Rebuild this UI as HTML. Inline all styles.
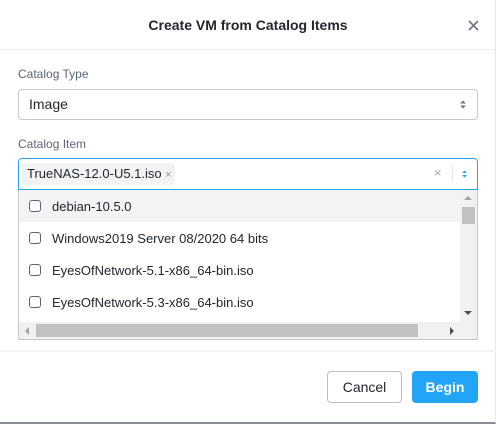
<!DOCTYPE html>
<html><head><style>
*{box-sizing:border-box;margin:0;padding:0}
body{width:496px;height:424px;background:#fff;font-family:"Liberation Sans",sans-serif;position:relative;overflow:hidden;color:#22272e}
.abs{position:absolute}
</style></head><body>
<div class="abs" style="left:0;top:0;width:496px;height:424px;border-right:1px solid #e4e6e9;border-bottom:2px solid #8a8d92"></div>
<div class="abs" style="left:0;top:14px;width:496px;text-align:center;font-size:14px;font-weight:bold;color:#22272e;line-height:22px">Create VM from Catalog Items</div>
<svg class="abs" style="left:468px;top:20px" width="11" height="11" viewBox="0 0 11 11"><path d="M1 1L10 10M10 1L1 10" stroke="#6b7480" stroke-width="1.6"/></svg>
<div class="abs" style="left:0;top:49px;width:496px;height:1px;background:#eceef0"></div>
<div class="abs" style="left:18px;top:67px;font-size:12px;color:#5b6573">Catalog Type</div>
<div class="abs" style="left:18px;top:89px;width:460px;height:31px;border:1px solid #c4c8ce;border-radius:4px"></div>
<div class="abs" style="left:29px;top:96px;font-size:14px;color:#22272e">Image</div>
<svg class="abs" style="left:460px;top:100px" width="6" height="9" viewBox="0 0 6 9"><path d="M0 3.5L3 0.5L6 3.5ZM0 5.5L3 8.5L6 5.5Z" fill="#6b7480"/></svg>
<div class="abs" style="left:18px;top:137px;font-size:12px;color:#5b6573">Catalog Item</div>
<div class="abs" style="left:18px;top:158px;width:460px;height:32px;border:1px solid #22a5f7;border-radius:4px 4px 0 0"></div>
<div class="abs" style="left:22px;top:163px;width:153px;height:22px;background:#f2f3f4;border-radius:3px"></div>
<div class="abs" style="left:27px;top:166px;font-size:13px;color:#22272e">TrueNAS-12.0-U5.1.iso <span style="color:#8a929c;font-size:11px">×</span></div>
<div class="abs" style="left:434px;top:165px;font-size:13px;color:#a0a6ae">×</div>
<div class="abs" style="left:452px;top:166px;width:1px;height:16px;background:#e4e6e9"></div>
<svg class="abs" style="left:462px;top:170px" width="5" height="8" viewBox="0 0 5 8"><path d="M0 3L2.5 0.5L5 3ZM0 5L2.5 7.5L5 5Z" fill="#22a5f7"/></svg>
<div class="abs" style="left:18px;top:190px;width:460px;height:150px;border:1px solid #c4c8ce;border-top:none"></div>
<div class="abs" style="left:19px;top:190px;width:441px;height:32px;background:#f2f3f4"></div>
<div class="abs" style="left:19px;top:190px;width:441px;font-size:13px;color:#22272e">
<div style="height:32px;display:flex;align-items:center"><span style="width:12px;height:12px;border:1.5px solid #5b6573;border-radius:3px;margin:0 11px 0 10px;background:#fff"></span>debian-10.5.0</div>
<div style="height:32px;display:flex;align-items:center"><span style="width:12px;height:12px;border:1.5px solid #5b6573;border-radius:3px;margin:0 11px 0 10px"></span>Windows2019 Server 08/2020 64 bits</div>
<div style="height:32px;display:flex;align-items:center"><span style="width:12px;height:12px;border:1.5px solid #5b6573;border-radius:3px;margin:0 11px 0 10px"></span>EyesOfNetwork-5.1-x86_64-bin.iso</div>
<div style="height:32px;display:flex;align-items:center"><span style="width:12px;height:12px;border:1.5px solid #5b6573;border-radius:3px;margin:0 11px 0 10px"></span>EyesOfNetwork-5.3-x86_64-bin.iso</div>
</div>
<div class="abs" style="left:460px;top:190px;width:17px;height:132px;background:#f1f1f1"></div>
<div class="abs" style="left:462px;top:207px;width:13px;height:17px;background:#c1c1c1"></div>
<svg class="abs" style="left:464px;top:196px" width="8" height="5"><path d="M0 4L4 0L8 4Z" fill="#a3a3a3"/></svg>
<svg class="abs" style="left:464px;top:311px" width="8" height="5"><path d="M0 0L4 4L8 0Z" fill="#505050"/></svg>
<div class="abs" style="left:19px;top:322px;width:458px;height:17px;background:#f1f1f1"></div>
<div class="abs" style="left:36px;top:324px;width:382px;height:13px;background:#c1c1c1"></div>
<svg class="abs" style="left:25px;top:327px" width="5" height="8"><path d="M4 0L0 4L4 8Z" fill="#a3a3a3"/></svg>
<svg class="abs" style="left:450px;top:327px" width="5" height="8"><path d="M0 0L4 4L0 8Z" fill="#505050"/></svg>
<div class="abs" style="left:0;top:350px;width:496px;height:2px;background:#f2f3f4"></div>
<div class="abs" style="left:327px;top:371px;width:75px;height:32px;border:1px solid #b8bec6;border-radius:4px;font-size:14px;text-align:center;line-height:30px;color:#22272e">Cancel</div>
<div class="abs" style="left:412px;top:371px;width:66px;height:32px;background:#22a5f7;border-radius:4px;font-size:14px;font-weight:bold;text-align:center;line-height:32px;color:#fff">Begin</div>
</body></html>
